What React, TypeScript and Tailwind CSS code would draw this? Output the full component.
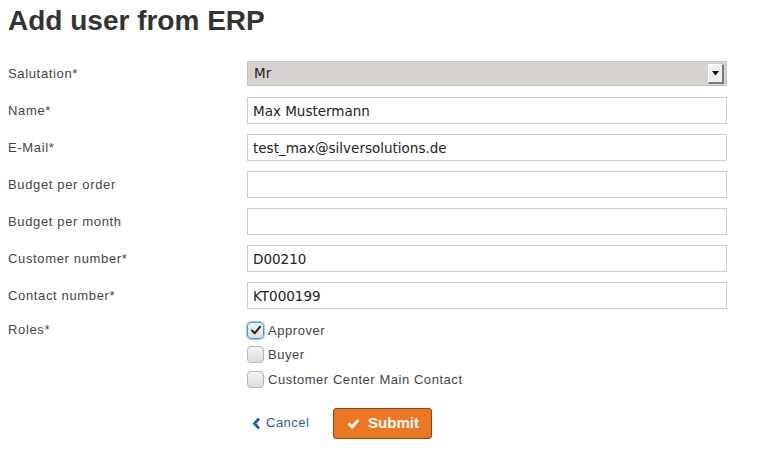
import React from "react";

const labelCls =
  "w-[239px] shrink-0 text-[13px] text-[#444] tracking-[0.65px] [font-family:'Liberation_Sans',Arial,sans-serif]";
const inputCls =
  "w-[480px] h-[27px] border border-[#ccc] bg-white px-[5px] text-[13.5px] text-[#222] [font-family:'DejaVu_Sans',sans-serif] outline-none";

function Row({ label, value }: { label: string; value?: string }) {
  return (
    <div className="flex items-center h-[37px]">
      <div className={labelCls}>{label}</div>
      <input className={inputCls} defaultValue={value ?? ""} />
    </div>
  );
}

function Check({ checked, label }: { checked?: boolean; label: string }) {
  return (
    <div className="flex items-center h-[24.5px]">
      <div
        className={
          "w-[17px] h-[17px] rounded-[4px] border flex items-center justify-center bg-gradient-to-b from-[#f4f3f2] to-[#dedcda] " +
          (checked ? "border-[#3c9be0] shadow-[0_0_0_1px_#9fd0f2]" : "border-[#b8b6b3]")
        }
      >
        {checked && (
          <svg width="12" height="12" viewBox="0 0 12 12">
            <path d="M2 6.5 L4.8 9.2 L10 2.8" fill="none" stroke="#222" strokeWidth="2" strokeLinecap="round" strokeLinejoin="round" />
          </svg>
        )}
      </div>
      <span className="ml-[4px] text-[13px] text-[#444] tracking-[0.55px] [font-family:'Liberation_Sans',Arial,sans-serif]">
        {label}
      </span>
    </div>
  );
}

export default function App() {
  return (
    <div className="w-[769px] h-[458px] bg-white pl-[8px] pt-[4px]">
      <h1 className="text-[28px] font-bold text-[#333] leading-[34px] [font-family:'Liberation_Sans',Arial,sans-serif]">
        Add user from ERP
      </h1>
      <div className="mt-[17px]">
        <div className="flex items-center h-[37px]">
          <div className={labelCls}>Salutation*</div>
          <div className="w-[480px] h-[25px] bg-[#d6d3cf] border border-[#c9c6c2] flex items-center justify-between pl-[6px] pr-[2px]">
            <span className="text-[13.5px] text-[#222] [font-family:'DejaVu_Sans',sans-serif]">Mr</span>
            <div className="w-[16px] h-[20px] bg-[#f2f1f0] border-r-2 border-b-2 border-r-[#7a7876] border-b-[#7a7876] border-l border-t border-l-white border-t-white flex items-center justify-center">
              <svg width="7" height="5" viewBox="0 0 7 5">
                <path d="M0 0 H7 L3.5 4.5 Z" fill="#111" />
              </svg>
            </div>
          </div>
        </div>
        <Row label="Name*" value="Max Mustermann" />
        <Row label="E-Mail*" value="test_max@silversolutions.de" />
        <Row label="Budget per order" />
        <Row label="Budget per month" />
        <Row label="Customer number*" value="D00210" />
        <Row label="Contact number*" value="KT000199" />
        <div className="flex mt-[4px]">
          <div className={labelCls + " leading-[20px] pt-[2px]"}>Roles*</div>
          <div className="flex flex-col">
            <Check checked label="Approver" />
            <Check label="Buyer" />
            <Check label="Customer Center Main Contact" />
          </div>
        </div>
        <div className="flex items-center ml-[244px] mt-[16px]">
          <a className="flex items-center text-[13px] text-[#1f5fa6] tracking-[0.5px] [font-family:'Liberation_Sans',Arial,sans-serif]">
            <svg width="9" height="13" viewBox="0 0 9 13" className="mr-[5px]">
              <path d="M7 1.5 L2.5 6.5 L7 11.5" fill="none" stroke="#1f5fa6" strokeWidth="2.8" />
            </svg>
            Cancel
          </a>
          <button className="ml-[24px] w-[99px] h-[31px] rounded-[3px] bg-[#ec7621] border border-[#8a4a18] flex items-center justify-center text-white text-[15px] font-bold [font-family:'Liberation_Sans',Arial,sans-serif]">
            <svg width="13" height="11" viewBox="0 0 13 11" className="mr-[8px]">
              <path d="M1.5 5.5 L5 9 L11.5 2" fill="none" stroke="#fff" strokeWidth="2.8" />
            </svg>
            Submit
          </button>
        </div>
      </div>
    </div>
  );
}
